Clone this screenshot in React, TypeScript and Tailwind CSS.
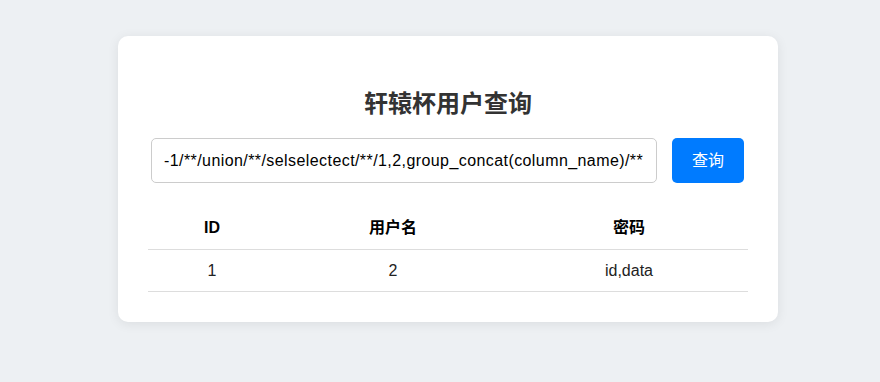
export default function App() {
  const rows = [{ id: "1", name: "2", pass: "id,data" }];

  return (
    <div
      className="min-h-[382px] w-full bg-[#edf0f3] pt-9 pl-4 text-[#222]"
      style={{ fontFamily: '"Liberation Sans", "Noto Sans CJK SC", sans-serif' }}
    >
      <div className="mx-auto w-[660px] rounded-[10px] bg-white px-[30px] pt-[52px] pb-[30px] shadow-[0_2px_12px_rgba(0,0,0,0.08)]">
        <h2 className="text-center text-[24px] leading-8 font-bold text-[#333]">
          轩辕杯用户查询
        </h2>

        <div className="mt-[18px] flex gap-[15px] pl-[3px]">
          <input
            readOnly
            value="-1/**/union/**/selselectect/**/1,2,group_concat(column_name)/**"
            className="h-[45px] w-[506px] rounded-[5px] border border-[#ccc] px-3 text-[16px] tracking-[0.42px] text-black outline-none"
          />
          <button className="h-[45px] w-[72px] rounded-[5px] bg-[#007bff] text-[16px] text-white">
            查询
          </button>
        </div>

        <div className="mt-[25px] grid grid-cols-[128px_234px_238px] text-center text-[16px] leading-[22px]">
          <div className="border-b border-[#ddd] pt-[9px] pb-[10px] font-bold text-black">ID</div>
          <div className="border-b border-[#ddd] pt-[9px] pb-[10px] font-bold text-black">用户名</div>
          <div className="border-b border-[#ddd] pt-[9px] pb-[10px] font-bold text-black">密码</div>
          {rows.map((r) => (
            <div key={r.id} className="contents">
              <div className="border-b border-[#ddd] pt-[10px] pb-[9px]">{r.id}</div>
              <div className="border-b border-[#ddd] pt-[10px] pb-[9px]">{r.name}</div>
              <div className="border-b border-[#ddd] pt-[10px] pb-[9px]">{r.pass}</div>
            </div>
          ))}
        </div>
      </div>
    </div>
  );
}
